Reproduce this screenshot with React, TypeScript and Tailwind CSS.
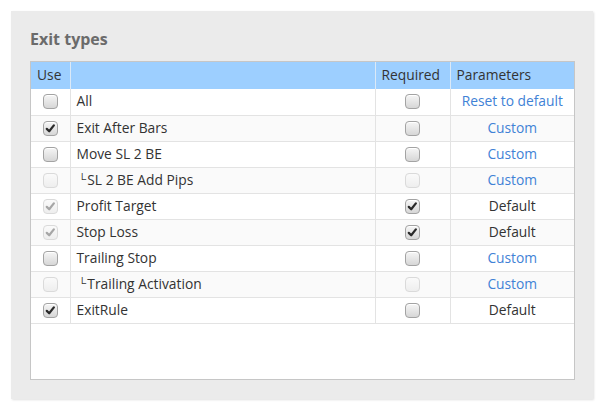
import React from "react";

type Row = {
  name: string;
  indent?: boolean;
  use: boolean;
  useDisabled?: boolean;
  req: boolean;
  reqDisabled?: boolean;
  param: string;
  link: boolean;
};

const rows: Row[] = [
  { name: "All", use: false, req: false, param: "Reset to default", link: true },
  { name: "Exit After Bars", use: true, req: false, param: "Custom", link: true },
  { name: "Move SL 2 BE", use: false, req: false, param: "Custom", link: true },
  { name: "SL 2 BE Add Pips", indent: true, use: false, useDisabled: true, req: false, reqDisabled: true, param: "Custom", link: true },
  { name: "Profit Target", use: true, useDisabled: true, req: true, param: "Default", link: false },
  { name: "Stop Loss", use: true, useDisabled: true, req: true, param: "Default", link: false },
  { name: "Trailing Stop", use: false, req: false, param: "Custom", link: true },
  { name: "Trailing Activation", indent: true, use: false, useDisabled: true, req: false, reqDisabled: true, param: "Custom", link: true },
  { name: "ExitRule", use: true, req: false, param: "Default", link: false },
];

function Box({ checked, disabled }: { checked: boolean; disabled?: boolean }) {
  return (
    <div
      className={
        "relative w-[15px] h-[15px] rounded-[4px] border mx-auto " +
        (disabled
          ? "border-[#dadada] bg-[linear-gradient(#fafafa,#eeeeee)]"
          : "border-[#a3a3a3] bg-[linear-gradient(#f6f6f6,#d6d6d6)] shadow-[inset_0_1px_0_#fff]")
      }
    >
      {checked && (
        <svg viewBox="0 0 14 14" className="absolute left-[0px] top-[0px] w-[13px] h-[13px]">
          <path
            d="M3 7.4 L5.6 10 L10.6 3.6"
            fill="none"
            stroke={disabled ? "#a6a6a6" : "#2a2a2a"}
            strokeWidth="2.4"
            strokeLinecap="round"
            strokeLinejoin="round"
          />
        </svg>
      )}
    </div>
  );
}

export default function App() {
  return (
    <div className="w-[604px] h-[413px] bg-white pt-[11px] pl-[11px] font-['Open_Sans',sans-serif]">
      <div className="w-[582px] h-[388px] bg-[#ebebeb] shadow-[1px_1px_2px_rgba(0,0,0,0.12)] px-[19px] pt-[12px]">
        <div className="h-[32px] mb-[6px] text-[16px] font-bold text-[#6b6b6b] leading-[32px]">Exit types</div>
        <div className="w-[545px] h-[319px] bg-white border border-[#c6c6c6]">
          <table className="w-full border-collapse text-[13.8px] text-[#333]">
            <colgroup>
              <col className="w-[39px]" />
              <col className="w-[305px]" />
              <col className="w-[75px]" />
              <col />
            </colgroup>
            <thead>
              <tr className="h-[27px] bg-[#9dcfff] text-[#333]">
                <th className="font-normal text-left pl-[6px] border-r border-[#dbe9f7]">Use</th>
                <th className="font-normal text-left border-r border-[#dbe9f7]"></th>
                <th className="font-normal text-left pl-[6px] border-r border-[#dbe9f7]">Required</th>
                <th className="font-normal text-left pl-[6px]">Parameters</th>
              </tr>
            </thead>
            <tbody>
              {rows.map((r, i) => (
                <tr
                  key={i}
                  className={"h-[26px] border-b border-[#e3e3e3] " + (i % 2 === 1 ? "bg-[#fafafa]" : "bg-white")}
                >
                  <td className="border-r border-[#e3e3e3] align-middle">
                    <Box checked={r.use} disabled={r.useDisabled} />
                  </td>
                  <td className="border-r border-[#e3e3e3] pl-[6px] whitespace-nowrap">
                    {r.indent ? (
                      <span>
                        <span className="text-[11px] relative top-[-2px] ml-[2px] mr-[1px]">└</span>
                        {r.name}
                      </span>
                    ) : (
                      r.name
                    )}
                  </td>
                  <td className="border-r border-[#e3e3e3] align-middle">
                    <Box checked={r.req} disabled={r.reqDisabled} />
                  </td>
                  <td className={"text-center " + (r.link ? "text-[#3f82d6]" : "text-[#333]")}>{r.param}</td>
                </tr>
              ))}
            </tbody>
          </table>
        </div>
      </div>
    </div>
  );
}
